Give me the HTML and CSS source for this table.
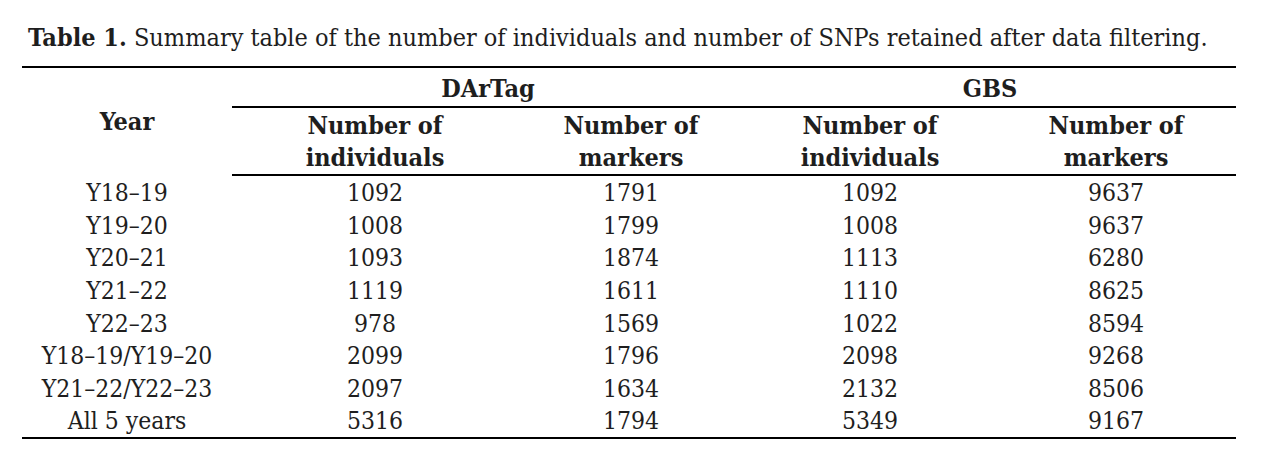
FILE: index.html
```html
<!DOCTYPE html>
<html lang="en">
<head>
<meta charset="utf-8">
<title>Table 1</title>
<link rel="stylesheet" href="styles.css">
</head>
<body>
<div class="page">
  <p class="caption"><b>Table 1.</b> Summary table of the number of individuals and number of SNPs retained after data filtering.</p>
  <table class="summary">
    <colgroup>
      <col class="c-year">
      <col class="c-1">
      <col class="c-2">
      <col class="c-3">
      <col class="c-4">
    </colgroup>
    <thead>
      <tr class="group-row">
        <th rowspan="2" class="year-head">Year</th>
        <th colspan="2" class="group">DArTag</th>
        <th colspan="2" class="group">GBS</th>
      </tr>
      <tr class="sub-row">
        <th>Number of<br>individuals</th>
        <th>Number of<br>markers</th>
        <th>Number of<br>individuals</th>
        <th>Number of<br>markers</th>
      </tr>
    </thead>
    <tbody>
      <tr><td>Y18–19</td><td>1092</td><td>1791</td><td>1092</td><td>9637</td></tr>
      <tr><td>Y19–20</td><td>1008</td><td>1799</td><td>1008</td><td>9637</td></tr>
      <tr><td>Y20–21</td><td>1093</td><td>1874</td><td>1113</td><td>6280</td></tr>
      <tr><td>Y21–22</td><td>1119</td><td>1611</td><td>1110</td><td>8625</td></tr>
      <tr><td>Y22–23</td><td>978</td><td>1569</td><td>1022</td><td>8594</td></tr>
      <tr><td>Y18–19/Y19–20</td><td>2099</td><td>1796</td><td>2098</td><td>9268</td></tr>
      <tr><td>Y21–22/Y22–23</td><td>2097</td><td>1634</td><td>2132</td><td>8506</td></tr>
      <tr><td>All 5 years</td><td>5316</td><td>1794</td><td>5349</td><td>9167</td></tr>
    </tbody>
  </table>
</div>
</body>
</html>
```

FILE: styles.css
```css
html, body {
  margin: 0;
  padding: 0;
  background: #ffffff;
}

.page {
  padding: 22px 27px 0 22px;
  font-family: "DejaVu Serif", "Liberation Serif", serif;
  font-stretch: condensed;
  font-size: 24.5px;
  color: #1e1e1e;
}

.caption {
  margin: 0 0 12px 6px;
  font-size: 25px;
  line-height: 32px;
  white-space: nowrap;
}

.caption b {
  font-weight: bold;
}

.summary {
  width: 1214px;
  border-collapse: collapse;
  table-layout: fixed;
  border-top: 2px solid #000;
  border-bottom: 2px solid #000;
}

.c-year { width: 210px; }
.c-1 { width: 286px; }
.c-2 { width: 226px; }
.c-3 { width: 252px; }
.c-4 { width: 240px; }

.summary th,
.summary td {
  padding: 0;
  text-align: center;
  vertical-align: middle;
}

.summary th {
  font-size: 25px;
  font-weight: bold;
  line-height: 32px;
}

.year-head {
  padding-top: 4px;
}

.group-row th.group {
  height: 34px;
  padding-top: 4px;
  border-bottom: 2px solid #000;
}

.sub-row th {
  height: 64px;
  padding-top: 2px;
  border-bottom: 2px solid #000;
}

.summary td {
  height: 30.6px;
  padding-top: 2px;
  line-height: 30px;
}
```
